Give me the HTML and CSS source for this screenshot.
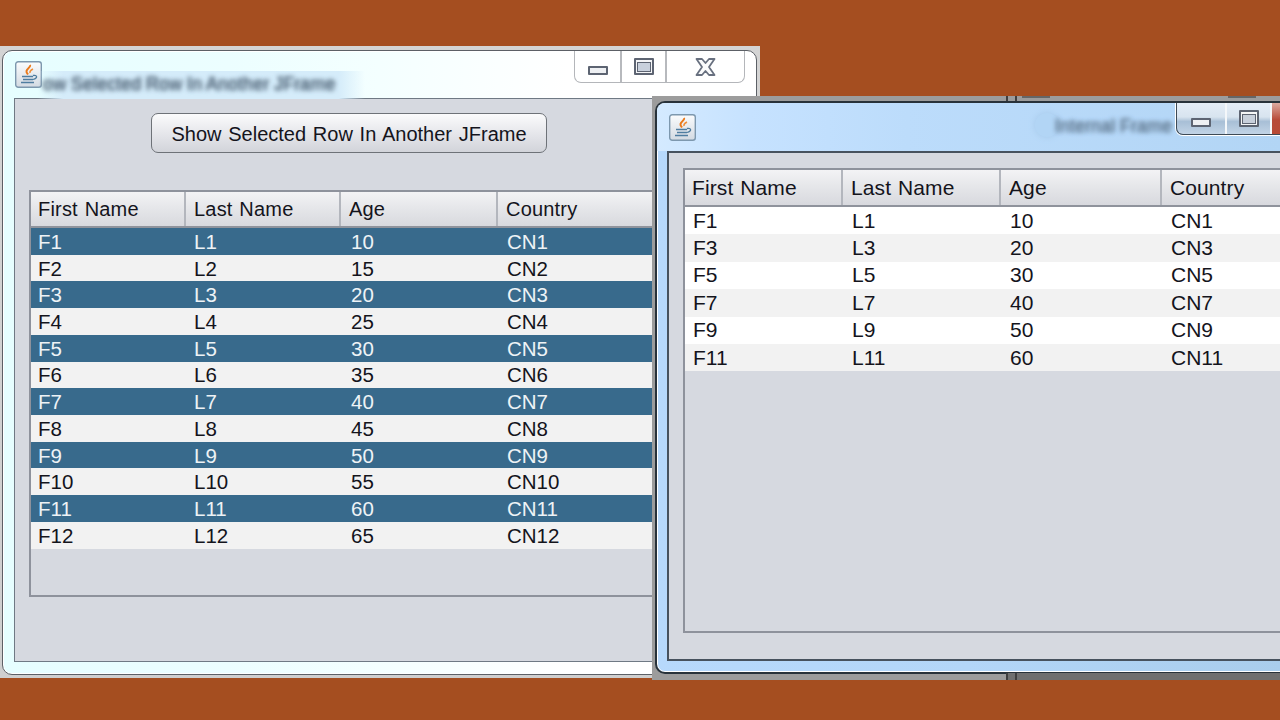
FILE: index.html
```html
<!DOCTYPE html>
<html lang="en">
<head>
<meta charset="utf-8">
<title>JFrames</title>
<link rel="stylesheet" href="styles.css">
</head>
<body>
<svg class="defs" width="0" height="0" aria-hidden="true">
  <defs>
    <linearGradient id="tile" x1="0" y1="0" x2="0" y2="1">
      <stop offset="0" stop-color="#fbfcfd"/>
      <stop offset="1" stop-color="#d3dae2"/>
    </linearGradient>
    <symbol id="java" viewBox="0 0 27 27">
      <rect x="0.7" y="0.7" width="25.6" height="25.6" rx="2.5" fill="url(#tile)" stroke="#7d98ae" stroke-width="1.4"/>
      <path d="M15 4c1 2-3 3.500-3.500 6 -.3 1.500.7 2.500 1.500 3.500" fill="none" stroke="#ea7a1c" stroke-width="2"/>
      <path d="M18 8c-2 1-3.500 2-3 4" fill="none" stroke="#ef8f3c" stroke-width="1.500"/>
      <path d="M7 15.500h11M8 18.500h10M6 21.500h13" fill="none" stroke="#4f7da0" stroke-width="1.500"/>
      <path d="M18 14.500c3-.8 4.500 1 3 2.500-.8.800-2 1.200-3 1.500" fill="none" stroke="#4f7da0" stroke-width="1.300"/>
    </symbol>
  </defs>
</svg>

<section class="plate plate-one">
  <div class="frame frame-one">
    <header class="titlebar titlebar-one">
      <svg class="java"><use href="#java"/></svg>
      <span class="glass-title">ow Selected Row In Another JFrame</span>
    </header>
    <div class="caption caption-one">
      <span class="cap cap-min"><i class="glyph-min"></i></span>
      <span class="cap cap-max"><i class="glyph-max"></i></span>
      <span class="cap cap-close">
        <svg width="21" height="18" viewBox="0 0 21 18"><path d="M1.500 1h5.500l3.500 4 3.500-4h5.500l-5.500 8 5.500 8h-5.500l-3.500-4-3.500 4H1.500L7 9z" fill="#fafbfc" stroke="#68707f" stroke-width="1.800" stroke-linejoin="round"/></svg>
      </span>
    </div>
    <main class="panel panel-one">
      <div class="button-row"><button class="action" type="button">Show Selected Row In Another JFrame</button></div>
      <div class="scroll scroll-one">
        <div class="thead thead-one"><span>First Name</span><span>Last Name</span><span>Age</span><span>Country</span></div>
        <div class="row row-one sel"><span>F1</span><span>L1</span><span>10</span><span>CN1</span></div>
        <div class="row row-one alt"><span>F2</span><span>L2</span><span>15</span><span>CN2</span></div>
        <div class="row row-one sel"><span>F3</span><span>L3</span><span>20</span><span>CN3</span></div>
        <div class="row row-one alt"><span>F4</span><span>L4</span><span>25</span><span>CN4</span></div>
        <div class="row row-one sel"><span>F5</span><span>L5</span><span>30</span><span>CN5</span></div>
        <div class="row row-one alt"><span>F6</span><span>L6</span><span>35</span><span>CN6</span></div>
        <div class="row row-one sel"><span>F7</span><span>L7</span><span>40</span><span>CN7</span></div>
        <div class="row row-one alt"><span>F8</span><span>L8</span><span>45</span><span>CN8</span></div>
        <div class="row row-one sel"><span>F9</span><span>L9</span><span>50</span><span>CN9</span></div>
        <div class="row row-one alt"><span>F10</span><span>L10</span><span>55</span><span>CN10</span></div>
        <div class="row row-one sel"><span>F11</span><span>L11</span><span>60</span><span>CN11</span></div>
        <div class="row row-one alt"><span>F12</span><span>L12</span><span>65</span><span>CN12</span></div>
      </div>
    </main>
  </div>
</section>

<section class="plate plate-two">
  <div class="frame frame-two">
    <header class="titlebar titlebar-two">
      <svg class="java"><use href="#java"/></svg>
      <span class="glass-blob"></span>
      <span class="glass-title glass-title-two">Internal Frame</span>
    </header>
    <div class="caption caption-two">
      <span class="cap cap-min2"><i class="glyph-min"></i></span>
      <span class="cap cap-max2"><i class="glyph-max"></i></span>
      <span class="cap cap-red"></span>
    </div>
    <main class="panel panel-two">
      <div class="scroll scroll-two">
        <div class="thead thead-two"><span>First Name</span><span>Last Name</span><span>Age</span><span>Country</span></div>
        <div class="row row-two"><span>F1</span><span>L1</span><span>10</span><span>CN1</span></div>
        <div class="row row-two alt"><span>F3</span><span>L3</span><span>20</span><span>CN3</span></div>
        <div class="row row-two"><span>F5</span><span>L5</span><span>30</span><span>CN5</span></div>
        <div class="row row-two alt"><span>F7</span><span>L7</span><span>40</span><span>CN7</span></div>
        <div class="row row-two"><span>F9</span><span>L9</span><span>50</span><span>CN9</span></div>
        <div class="row row-two alt"><span>F11</span><span>L11</span><span>60</span><span>CN11</span></div>
      </div>
    </main>
  </div>
</section>

<div class="behind behind-top"><i></i><i></i><b></b><b class="far"></b></div>
<div class="behind behind-bottom"><i></i><i></i></div>
</body>
</html>
```
FILE: styles.css
```css
* { box-sizing: border-box; }
html, body { margin: 0; padding: 0; }
body {
  width: 1280px;
  height: 720px;
  overflow: hidden;
  position: relative;
  background: #a54e20;
  font-family: "Liberation Sans", Arial, sans-serif;
  color: #14141c;
}
.defs { position: absolute; }

/* window peeking out behind the second frame */
.behind { position: absolute; left: 1006px; width: 274px; display: flex; gap: 7px; }
.behind i { width: 2px; height: 100%; background: #3f3f3f; flex: none; }
.behind-top { top: 96px; height: 5px; }
.behind-top b { position: absolute; left: 16px; top: 0; width: 28px; height: 2px; background: #666; }
.behind-top b.far { left: 222px; }
.behind-bottom { top: 673px; height: 7px; background: #6f6f6f; }

/* desktop windows */
.plate { position: absolute; }
.plate-one {
  left: 0; top: 46px; width: 760px; height: 632px;
  background: linear-gradient(#d4d4d4, #cfcfcf);
  padding: 4px 3px 3px 2px;
}
.plate-two {
  left: 652px; top: 96px; width: 628px; height: 584px;
  background: #9c9c9c;
  padding: 5px 0 6px 3px;
  overflow: hidden;
}
.frame {
  position: relative;
  height: 100%;
  display: flex;
  flex-direction: column;
  border: 1px solid #5c6066;
  border-radius: 10px 10px 0 10px;
  overflow: hidden;
}
.frame-one {
  background: linear-gradient(90deg, #e6feff 0, #ecfeff 30%, #f4ffff 50%, #fff 75%);
  box-shadow: inset 0 0 0 1px #fff;
}
.frame-two {
  border-color: #28323a;
  border-width: 2px 0 2px 2px;
  border-radius: 10px 0 0 10px;
  background: linear-gradient(90deg, #b7d9fc 0, #b3d6f8 50%, #a9cdec 100%);
  box-shadow: inset 0 1px 0 #fff, inset 1px 0 0 #fff, inset 0 -1px 0 #fff;
}

/* title bars */
.titlebar { position: relative; flex: none; display: flex; align-items: flex-start; }
.titlebar-one { height: 47px; padding: 10px 0 0 12px; }
.titlebar-two {
  height: 48px; padding: 11px 0 0 12px;
  background: linear-gradient(90deg, #d4eaff 0, #c6e2ff 15%, #bcdcfb 40%, #b2d5f5 100%);
}
.java { width: 27px; height: 27px; flex: none; display: block; }
.glass-title {
  position: absolute;
  left: 34px; top: 20px;
  width: 328px;
  padding: 2px 0 4px 6px;
  white-space: nowrap;
  font-size: 18px;
  line-height: 22px;
  color: transparent;
  text-shadow: 0 0 5px #4a5f72, 0 0 4px #7f93a5;
  background: linear-gradient(90deg, rgba(205,232,248,0), #d5ecfa 8%, #d5ecfa 92%, rgba(205,232,248,0));
}
.glass-title-two {
  left: 398px; top: 10px;
  width: 122px;
  padding-left: 0;
  background: none;
  text-shadow: 0 0 5px #5f7890, 0 0 4px #7c95ad;
}
.glass-blob {
  position: absolute; left: 378px; top: 10px;
  width: 24px; height: 24px; border-radius: 50%;
  background: #b2d5f5;
  box-shadow: 0 0 6px #a6c9ea;
}

/* caption buttons */
.caption {
  position: absolute;
  display: flex;
  border: 1px solid #b4b6ba;
  border-top: 0;
  border-radius: 0 0 7px 7px;
}
.caption-one { left: 571px; top: 0; height: 32px; width: 171px; background: #fff; }
.caption-two {
  left: 519px; top: 0; height: 32px; width: 104px;
  border-color: #3e4a55;
  border-right: 0;
  border-radius: 0 0 0 7px;
  box-shadow: 0 0 0 1px #fff;
  background: linear-gradient(#e4edf6 0, #d8e4ef 45%, #a8bfd6 60%, #c2d4e6 100%);
}
.cap { display: flex; align-items: center; justify-content: center; border-right: 2px solid #b7b9bd; flex: none; }
.caption-two .cap { border-right-color: #f4f7fa; }
.cap-min { width: 47px; padding-top: 8px; }
.cap-max { width: 45px; }
.cap-close { width: 77px; border-right: 0; }
.cap-min2 { width: 50px; padding-top: 8px; }
.cap-max2 { width: 45px; }
.cap-red { width: 9px; border-right: 0; background: linear-gradient(#dcaaa0, #b74a38 55%, #b84a36); }
.caption-two .cap-red { border-right: 0; }
.glyph-min {
  display: block; width: 20px; height: 9px;
  background: #eef0f3; border: 2px solid #5d6472; border-radius: 1px;
}
.glyph-max {
  display: flex; align-items: center; justify-content: center;
  width: 20px; height: 17px;
  background: #f4f5f7; border: 2px solid #5d6472; border-radius: 1px;
}
.glyph-max::after {
  content: ""; display: block; width: 12px; height: 8px;
  background: #c8d0dc; border: 1.500px solid #5d6472;
}

/* content */
.panel {
  flex: 1;
  min-width: 0;
  background: #d6d9e0;
  border: 1px solid #6f7984;
  border-right: 0;
  display: flex;
  flex-direction: column;
}
.panel-one { margin: 0 11px 12px 11px; padding: 14px 0 0 14px; }
.panel-two { margin: 0 0 11px 10px; padding: 15px 0 0 14px; border-color: #47525e; border-width: 2px 0 2px 2px; }
.button-row { width: 640px; display: flex; justify-content: center; }
.action {
  width: 396px; height: 40px; padding: 2px 0 0;
  font: 20px "Liberation Sans", Arial, sans-serif;
  word-spacing: 1.200px;
  color: #14141c;
  background: linear-gradient(#fbfbfc, #e2e3e8 60%, #d2d4da);
  border: 1.500px solid #6e7278;
  border-radius: 7px;
}
.scroll { border: 1px solid #8e929c; border-width: 2px 0 2px 2px; flex: none; }
.scroll-one { margin-top: 37px; height: 407px; }
.scroll-two { height: 465px; }
.thead, .row { display: grid; font-size: 20.5px; align-items: center; }
.thead-one { grid-template-columns: 155px 155px 157px 1fr; font-size: 20px; letter-spacing: .2px; word-spacing: 1px; }
.row-one { grid-template-columns: 156px 157px 156px 1fr; }
.thead-two, .row-two { grid-template-columns: 158px 158px 161px 1fr; }
.thead {
  background: linear-gradient(#f3f3f5, #e6e7ea 45%, #d8d9de);
  border-bottom: 2px solid #8f939c;
}
.thead-one { height: 36px; }
.thead-two { height: 37px; font-size: 21px; letter-spacing: .1px; word-spacing: 1px; }
.thead span {
  height: 100%; display: flex; align-items: center;
  padding-left: 8px;
  border-right: 2px solid #b3b6bd;
}
.thead span:first-child { padding-left: 7px; }
.thead span:last-child { border-right: 0; }
.row span { padding-left: 9px; }
.row-one span { padding: 1px 0 0 7px; }
.row-two span:first-child { padding-left: 8px; }
.row-one { height: 26.73px; }
.row-two { height: 27.4px; font-size: 21px; background: #fff; }
.alt { background: #f2f2f2; }
.sel { background: #386a8c; color: #eef3f6; }
```
